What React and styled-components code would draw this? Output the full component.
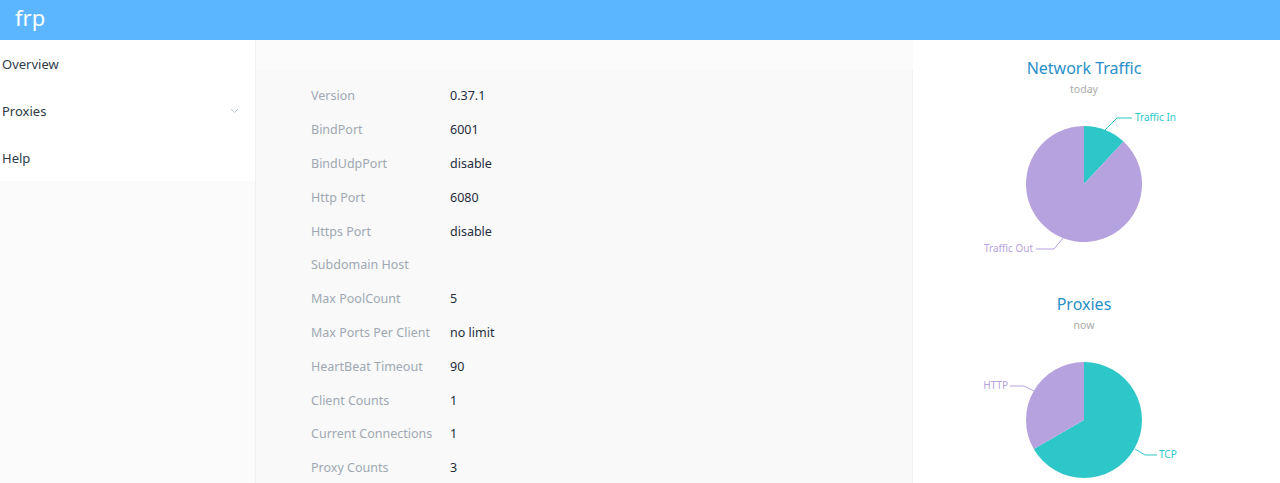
import React from "react";
import styled, { createGlobalStyle } from "styled-components";

const GlobalStyle = createGlobalStyle`
    html, body {
        margin: 0;
        padding: 0;
        background: #fbfbfb;
        font-family: "Noto Sans", "Open Sans", sans-serif;
    }
`;

const PURPLE = "#b6a2de";
const TEAL = "#2ec7c9";

const Header = styled.header`
    height: 40px;
    background-color: #5cb6ff;
    display: flex;
    align-items: center;
    padding-left: 15px;

    > span {
        color: #fff;
        font-size: 22px;
        line-height: 1;
        margin-top: -6px;
    }
`;

const Layout = styled.div`
    display: flex;
    align-items: flex-start;
    height: 443px;
    overflow: hidden;
`;

const Sidebar = styled.nav`
    width: 255px;
    flex-shrink: 0;
    background: #fff;
`;

const MenuItem = styled.div`
    height: 47px;
    display: flex;
    align-items: center;
    justify-content: space-between;
    padding: 0 16px 0 2px;
    font-size: 13px;
    color: #2f3b4a;
`;

const Main = styled.main`
    flex: 1;
    display: flex;
    height: 100%;
    border-left: 1px solid #f0f0f0;
`;

const InfoColumn = styled.section`
    width: 657px;
    background: #f9f9f9;
    border-right: 1px solid #f1f1f1;
    margin-top: 30px;
    padding: 9px 0 0 55px;
    box-sizing: border-box;
`;

const InfoRow = styled.div`
    display: flex;
    height: 33.8px;
    align-items: center;
    font-size: 12.5px;
`;

const Label = styled.span`
    width: 139px;
    color: #a0a8b3;
`;

const Value = styled.span`
    color: #1f2d3d;
`;

const ChartColumn = styled.section`
    flex: 1;
    background: #fff;
    padding-top: 16px;
    display: flex;
    flex-direction: column;
`;

const ChartBlock = styled.div`
    display: flex;
    flex-direction: column;
    align-items: center;
    width: 342px;
`;

const ChartTitle = styled.div`
    font-size: 16px;
    line-height: 24px;
    color: #2a8fc9;
`;

const ChartSub = styled.div`
    font-size: 10.5px;
    line-height: 14px;
    margin-top: 2px;
    color: #aaa;
`;

const LabelText = styled.text`
    font-size: 10px;
    font-family: "Noto Sans", sans-serif;
`;

const info = [
    ["Version", "0.37.1"],
    ["BindPort", "6001"],
    ["BindUdpPort", "disable"],
    ["Http Port", "6080"],
    ["Https Port", "disable"],
    ["Subdomain Host", ""],
    ["Max PoolCount", "5"],
    ["Max Ports Per Client", "no limit"],
    ["HeartBeat Timeout", "90"],
    ["Client Counts", "1"],
    ["Current Connections", "1"],
    ["Proxy Counts", "3"],
];

const CX = 171;
const CY = 88;
const R = 58;

const pt = (deg, r = R) => {
    const a = (deg * Math.PI) / 180;
    return [CX + r * Math.sin(a), CY - r * Math.cos(a)];
};

const slice = (a0, a1) => {
    const [x0, y0] = pt(a0);
    const [x1, y1] = pt(a1);
    const large = a1 - a0 > 180 ? 1 : 0;
    return `M${CX},${CY} L${x0},${y0} A${R},${R} 0 ${large} 1 ${x1},${y1} Z`;
};

// slices: [start, end, color] in degrees clockwise from 12 o'clock
const Pie = ({ slices, labels }) => (
    <svg width="342" height="196">
        {slices.map(([a0, a1, c], i) => (
            <path key={i} d={slice(a0, a1)} fill={c} />
        ))}
        {labels.map(({ line, text, x, y, anchor, color }, i) => (
            <g key={i}>
                <polyline points={line} fill="none" stroke={color} strokeWidth="1" />
                <LabelText x={x} y={y} textAnchor={anchor} fill={color} dominantBaseline="middle">
                    {text}
                </LabelText>
            </g>
        ))}
    </svg>
);

const Chevron = () => (
    <svg width="9" height="6" viewBox="0 0 9 6">
        <path d="M1 1 L4.5 4.5 L8 1" fill="none" stroke="#bfcbd9" strokeWidth="1" />
    </svg>
);

const App = () => {
    return (
        <>
            <GlobalStyle />
            <Header>
                <span>frp</span>
            </Header>
            <Layout>
                <Sidebar>
                    <MenuItem>Overview</MenuItem>
                    <MenuItem>
                        Proxies
                        <Chevron />
                    </MenuItem>
                    <MenuItem>Help</MenuItem>
                </Sidebar>
                <Main>
                    <InfoColumn>
                        {info.map(([k, v]) => (
                            <InfoRow key={k}>
                                <Label>{k}</Label>
                                <Value>{v}</Value>
                            </InfoRow>
                        ))}
                    </InfoColumn>
                    <ChartColumn>
                        <ChartBlock>
                            <ChartTitle>Network Traffic</ChartTitle>
                            <ChartSub>today</ChartSub>
                            <Pie
                                slices={[
                                    [0, 43, TEAL],
                                    [43, 360, PURPLE],
                                ]}
                                labels={[
                                    {
                                        line: "192,34 204,22 219,22",
                                        text: "Traffic In",
                                        x: 222,
                                        y: 22,
                                        anchor: "start",
                                        color: TEAL,
                                    },
                                    {
                                        line: "150,142 141,153 123,153",
                                        text: "Traffic Out",
                                        x: 120,
                                        y: 153,
                                        anchor: "end",
                                        color: PURPLE,
                                    },
                                ]}
                            />
                        </ChartBlock>
                        <ChartBlock>
                            <ChartTitle>Proxies</ChartTitle>
                            <ChartSub>now</ChartSub>
                            <Pie
                                slices={[
                                    [0, 240, TEAL],
                                    [240, 360, PURPLE],
                                ]}
                                labels={[
                                    {
                                        line: "222,117 232,123 244,123",
                                        text: "TCP",
                                        x: 246,
                                        y: 123,
                                        anchor: "start",
                                        color: TEAL,
                                    },
                                    {
                                        line: "121,59 111,54 97,54",
                                        text: "HTTP",
                                        x: 95,
                                        y: 54,
                                        anchor: "end",
                                        color: PURPLE,
                                    },
                                ]}
                            />
                        </ChartBlock>
                    </ChartColumn>
                </Main>
            </Layout>
        </>
    );
};

export default App;
